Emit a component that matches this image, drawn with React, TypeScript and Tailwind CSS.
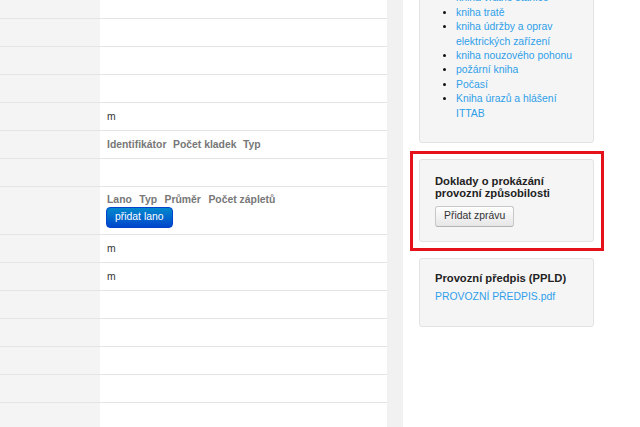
import React from 'react';

type Row = { kind: 'empty' | 'm' | 'kladky' | 'lana' };

const rows: Row[] = [
  { kind: 'empty' },
  { kind: 'empty' },
  { kind: 'empty' },
  { kind: 'm' },
  { kind: 'kladky' },
  { kind: 'empty' },
  { kind: 'lana' },
  { kind: 'm' },
  { kind: 'm' },
  { kind: 'empty' },
  { kind: 'empty' },
  { kind: 'empty' },
  { kind: 'empty' },
  { kind: 'empty' },
];

const books = [
  'kniha provozu',
  'kniha vratné stanice',
  'kniha tratě',
  'kniha údržby a oprav elektrických zařízení',
  'kniha nouzového pohonu',
  'požární kniha',
  'Počasí',
  'Kniha úrazů a hlášení ITTAB',
];

const TableRow: React.FC<{ row: Row }> = ({ row }) => {
  const tall = row.kind === 'lana';
  return (
    <div className={`flex border-t border-[#e4e4e4] ${tall ? 'h-[48px]' : 'h-[28px]'}`}>
      <div className="w-[100px] shrink-0 bg-[#f4f4f4]" />
      <div className={`flex-1 bg-white px-[7px] flex ${tall ? 'flex-col justify-start pt-[6px]' : 'items-center'}`}>
        {row.kind === 'm' && <span className="text-[10.4px] text-[#333]">m</span>}
        {row.kind === 'kladky' && (
          <div className="flex gap-[6.5px] text-[10.4px] font-bold text-[#777]">
            <span>Identifikátor</span>
            <span>Počet kladek</span>
            <span>Typ</span>
          </div>
        )}
        {row.kind === 'lana' && (
          <>
            <div className="flex gap-[7.5px] text-[10.4px] font-bold text-[#777] leading-[14px]">
              <span>Lano</span>
              <span>Typ</span>
              <span>Průměr</span>
              <span>Počet zápletů</span>
            </div>
            <button className="mt-[0px] -ml-[1px] self-start h-[21px] px-[8px] rounded-[4px] border border-[#0044cc] bg-gradient-to-b from-[#0088cc] to-[#0044cc] text-white text-[10.4px] leading-none">
              přidat lano
            </button>
          </>
        )}
      </div>
    </div>
  );
};

export default function App() {
  return (
    <div className="h-[427px] w-[640px] overflow-hidden flex font-['Liberation_Sans',Arial,sans-serif] bg-white">
      <div className="w-[387px] shrink-0">
        <div className="flex h-[18px]">
          <div className="w-[100px] bg-[#f4f4f4]" />
          <div className="flex-1 bg-white" />
        </div>
        {rows.map((r, i) => (
          <TableRow key={i} row={r} />
        ))}
      </div>
      <div className="w-[16px] shrink-0 bg-[#f1f1f1]" />
      <div className="flex-1 bg-white pl-[16px]">
        <div className="-mt-[34px] w-[175px] bg-[#f5f5f5] border border-[#e3e3e3] rounded-[3px] pt-[10px] pb-[21px] pl-[16px] pr-[10px]">
          <ul className="list-disc pl-[20px] text-[10.4px] leading-[14.4px] text-[#2f9fe9] marker:text-[#111]">
            {books.map((b) => (
              <li key={b}>{b}</li>
            ))}
          </ul>
        </div>
        <div className="mt-[8px] -ml-[9px] w-[194px] border-[3px] border-[#e5121c] pl-[6px] pr-[7px] pt-[5px] pb-[6px]">
          <div className="w-[175px] bg-[#f5f5f5] border border-[#e3e3e3] rounded-[3px] px-[15px] pt-[14.5px] pb-[14px]">
            <h4 className="text-[11.2px] font-bold leading-[12.8px] text-[#222]">
              Doklady o prokázání provozní způsobilosti
            </h4>
            <button className="mt-[5.5px] h-[21px] px-[8px] rounded-[3px] border border-[#c8c8c8] border-b-[#b3b3b3] bg-gradient-to-b from-white to-[#e6e6e6] text-[10.4px] text-[#333] leading-none">
              Přidat zprávu
            </button>
          </div>
        </div>
        <div className="mt-[7px] w-[175px] bg-[#f5f5f5] border border-[#e3e3e3] rounded-[3px] px-[15px] pt-[13.5px] pb-[22px]">
          <h4 className="text-[11.2px] font-bold leading-[12.8px] text-[#222]">Provozní předpis (PPLD)</h4>
          <a className="mt-[5px] block text-[10.4px] leading-[14.4px] text-[#2f9fe9]">PROVOZNÍ PŘEDPIS.pdf</a>
        </div>
      </div>
    </div>
  );
}
